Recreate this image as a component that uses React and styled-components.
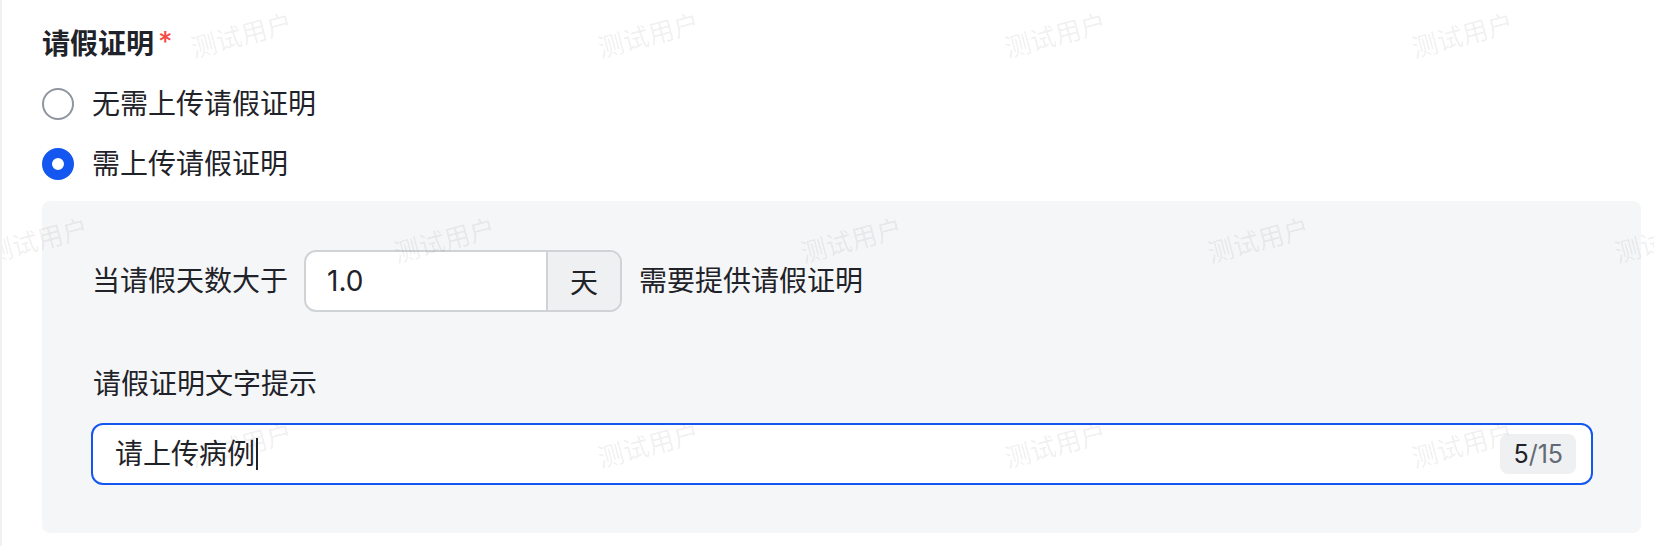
import React from 'react';
import styled, { createGlobalStyle } from 'styled-components';

const GlobalStyle = createGlobalStyle`
  html, body {
    margin: 0;
    padding: 0;
    background: #ffffff;
  }
  body {
    font-family: Inter, "Noto Sans CJK SC", sans-serif;
    color: #1f2329;
  }
`;

const options = [
  { id: 'none', label: '无需上传请假证明', checked: false },
  { id: 'need', label: '需上传请假证明', checked: true },
];

// 水印行：每行的起点偏移
const watermarkRows = [36, -168, 36];
const watermarkCols = [0, 1, 2, 3, 4];

const App = () => {
  return (
    <>
      <GlobalStyle />
      <Page>
        <FieldTitle>
          请假证明<Required>*</Required>
        </FieldTitle>

        <RadioGroup>
          {options.map(opt => (
            <RadioRow key={opt.id}>
              <RadioDot $checked={opt.checked} />
              <RadioLabel>{opt.label}</RadioLabel>
            </RadioRow>
          ))}
        </RadioGroup>

        <SubPanel>
          <ConditionRow>
            <Text>当请假天数大于</Text>
            <InputGroup>
              <NumberValue>1.0</NumberValue>
              <Addon>天</Addon>
            </InputGroup>
            <Text>需要提供请假证明</Text>
          </ConditionRow>

          <SubLabel>请假证明文字提示</SubLabel>
          <TextInput>
            <InputText>
              请上传病例
              <Caret />
            </InputText>
            <Counter>
              5<CounterTotal>/15</CounterTotal>
            </Counter>
          </TextInput>
        </SubPanel>

        <Watermark>
          {watermarkRows.map((offset, i) => (
            <WatermarkRow key={i} $offset={offset}>
              {watermarkCols.map(j => (
                <WatermarkCell key={j}>
                  <WatermarkText>测试用户</WatermarkText>
                </WatermarkCell>
              ))}
            </WatermarkRow>
          ))}
        </Watermark>
      </Page>
    </>
  );
};

// 样式
const Page = styled.div`
  position: relative;
  height: 546px;
  box-sizing: border-box;
  border-left: 2px solid #f0f1f3;
  padding: 24px 13px 0 40px;
  overflow: hidden;
`;

const FieldTitle = styled.div`
  font-size: 28px;
  line-height: 40px;
  font-weight: 600;
  color: #1f2329;
  display: flex;
  align-items: flex-start;
`;

const Required = styled.span`
  color: #f54a45;
  font-size: 28px;
  font-weight: 500;
  line-height: 36px;
  margin-left: 4px;
`;

const RadioGroup = styled.div`
  margin-top: 10px;
  display: flex;
  flex-direction: column;
`;

const RadioRow = styled.label`
  height: 60px;
  display: flex;
  align-items: center;
  gap: 18px;
`;

const RadioDot = styled.span`
  width: 32px;
  height: 32px;
  box-sizing: border-box;
  border-radius: 50%;
  background: #ffffff;
  border: ${p => (p.$checked ? '10px solid #1456f0' : '2px solid #8f959e')};
  flex-shrink: 0;
`;

const RadioLabel = styled.span`
  font-size: 28px;
  line-height: 40px;
`;

const SubPanel = styled.div`
  margin-top: 7px;
  background: #f5f6f7;
  border-radius: 8px;
  padding: 49px 48px 48px 49px;
`;

const ConditionRow = styled.div`
  display: flex;
  align-items: center;
  gap: 16px;
`;

const Text = styled.span`
  font-size: 28px;
  line-height: 40px;
  padding-left: 1px;
`;

const InputGroup = styled.div`
  display: flex;
  width: 318px;
  height: 62px;
  box-sizing: border-box;
  border: 2px solid #d0d3d6;
  border-radius: 12px;
  overflow: hidden;
  background: #ffffff;
`;

const NumberValue = styled.div`
  flex: 1;
  display: flex;
  align-items: center;
  padding-left: 21px;
  font-size: 28px;
`;

const Addon = styled.div`
  width: 72px;
  border-left: 2px solid #d0d3d6;
  background: #eff0f1;
  display: flex;
  align-items: center;
  justify-content: center;
  font-size: 28px;
`;

const SubLabel = styled.div`
  margin-top: 52px;
  font-size: 28px;
  line-height: 40px;
  padding-left: 2px;
`;

const TextInput = styled.div`
  margin-top: 19px;
  height: 62px;
  box-sizing: border-box;
  border: 2px solid #1456f0;
  border-radius: 12px;
  background: #ffffff;
  display: flex;
  align-items: center;
  justify-content: space-between;
  padding: 0 15px 0 22px;
`;

const InputText = styled.div`
  display: flex;
  align-items: center;
  font-size: 28px;
  line-height: 40px;
`;

const Caret = styled.span`
  width: 2px;
  height: 32px;
  background: #1f2329;
  margin-left: 1px;
`;

const Counter = styled.span`
  background: #eff0f1;
  border-radius: 8px;
  height: 40px;
  padding: 0 13px;
  display: flex;
  align-items: center;
  font-size: 25px;
  color: #1f2329;
`;

const CounterTotal = styled.span`
  color: #646a73;
`;

const Watermark = styled.div`
  position: absolute;
  top: -69px;
  left: 0;
  right: 0;
  bottom: 0;
  pointer-events: none;
  display: flex;
  flex-direction: column;
`;

const WatermarkRow = styled.div`
  height: 206px;
  display: flex;
  margin-left: ${p => p.$offset}px;
`;

const WatermarkCell = styled.div`
  width: 407px;
  flex-shrink: 0;
  display: flex;
  align-items: center;
  justify-content: center;
`;

const WatermarkText = styled.span`
  font-family: "Noto Sans CJK SC", sans-serif;
  font-size: 26px;
  color: rgba(31, 35, 41, 0.08);
  transform: rotate(-15deg);
  white-space: nowrap;
`;

export default App;
